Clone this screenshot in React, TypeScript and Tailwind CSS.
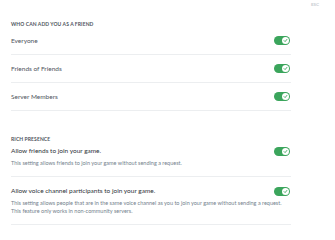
import React from "react";

const font = { fontFamily: "Lato, 'Open Sans', sans-serif" };

function Toggle() {
  return (
    <div className="w-[16px] h-[9px] rounded-full bg-[#3ba55c] flex items-center justify-end pr-[1px] shrink-0">
      <div className="w-[7px] h-[7px] rounded-full bg-white flex items-center justify-center">
        <svg width="5" height="5" viewBox="0 0 10 10">
          <path d="M2.2 5.2 L4.2 7.2 L7.8 2.8" fill="none" stroke="#3ba55c" strokeWidth="1.8" strokeLinecap="round" strokeLinejoin="round" />
        </svg>
      </div>
    </div>
  );
}

function SimpleRow({ label }: { label: string }) {
  return (
    <div className="h-[28px] flex items-center justify-between border-b border-[#eceef0]">
      <span className="text-[6.5px] leading-[8px] text-[#4f5660]">{label}</span>
      <div className="mr-[1px]"><Toggle /></div>
    </div>
  );
}

export default function App() {
  return (
    <div style={font} className="relative w-[335px] h-[240px] bg-white overflow-hidden">
      <div className="absolute top-[2px] left-[311px] text-[4.5px] leading-[6px] font-bold text-[#c7ccd1]">ESC</div>
      <div className="pl-[11px] pt-[21px] w-[291px]">
        <div className="text-[5px] leading-[6px] font-bold uppercase text-[#4f5660] tracking-[0.1px]">
          Who can add you as a friend
        </div>
        <SimpleRow label="Everyone" />
        <SimpleRow label="Friends of Friends" />
        <SimpleRow label="Server Members" />

        <div className="mt-[25px] text-[5px] leading-[6px] font-bold uppercase text-[#4f5660] tracking-[0.1px]">
          Rich Presence
        </div>
        <div className="pt-[5px] pb-[9px] border-b border-[#eceef0]">
          <div className="flex items-center justify-between h-[8px]">
            <span className="text-[6.5px] leading-[8px] text-[#2e3338]">Allow friends to join your game.</span>
            <div className="mr-[1px]"><Toggle /></div>
          </div>
          <div className="mt-[4px] text-[5.5px] leading-[8px] text-[#747f8d]">
            This setting allows friends to join your game without sending a request.
          </div>
        </div>
        <div className="pt-[10px] pb-[9px] border-b border-[#eceef0]">
          <div className="flex items-center justify-between h-[8px]">
            <span className="text-[6.5px] leading-[8px] text-[#2e3338]">Allow voice channel participants to join your game.</span>
            <div className="mr-[1px]"><Toggle /></div>
          </div>
          <div className="mt-[4px] text-[5.5px] leading-[8px] text-[#747f8d]">
            This setting allows people that are in the same voice channel as you to join your game without sending a request.
            <br />
            This feature only works in non-community servers.
          </div>
        </div>
      </div>
    </div>
  );
}
